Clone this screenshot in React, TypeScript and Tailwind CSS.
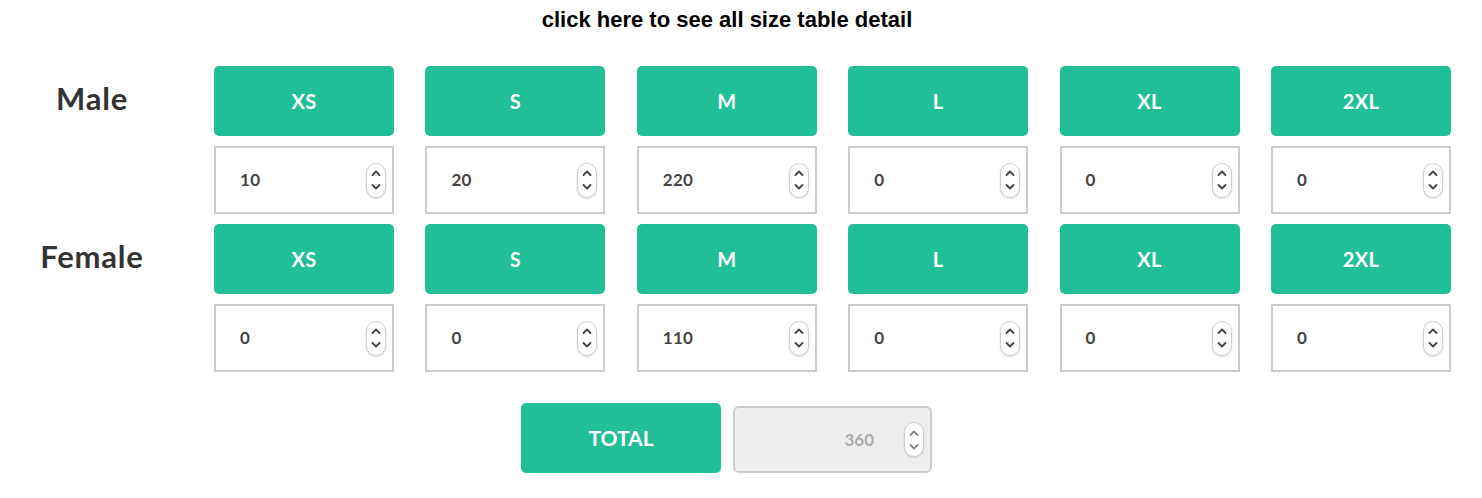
const sizes = ["XS", "S", "M", "L", "XL", "2XL"];

const rows = [
  { label: "Male", values: [10, 20, 220, 0, 0, 0] },
  { label: "Female", values: [0, 0, 110, 0, 0, 0] },
];

const Spinner = ({ muted }: { muted?: boolean }) => (
  <div className="flex h-[35px] w-[20px] flex-col items-center justify-center rounded-full border border-[#cfcfcf] bg-white shadow-[0_1px_2px_rgba(0,0,0,0.15)]">
    <svg width="12" height="28" viewBox="0 0 12 28" fill="none" stroke={muted ? "#888" : "#444"} strokeWidth="1.8" strokeLinecap="round" strokeLinejoin="round">
      <path d="M2.5 9 L6 5.5 L9.5 9" />
      <path d="M2.5 19 L6 22.5 L9.5 19" />
    </svg>
  </div>
);

const SizeButton = ({ text }: { text: string }) => (
  <div className="flex h-[70px] w-[180px] items-center justify-center rounded-[5px] bg-[#20bf96] text-[20px] font-bold tracking-[0.3px] text-white">
    {text}
  </div>
);

const NumberBox = ({ value }: { value: number }) => (
  <div className="flex h-[68px] w-[180px] items-center justify-between border-2 border-[#cccccc] bg-white pl-[24px] pr-[6px] text-[17px] font-bold tracking-[0.3px] text-[#444]">
    <span>{value}</span>
    <Spinner />
  </div>
);

export default function App() {
  return (
    <div className="h-[498px] w-[1482px] bg-white font-['Lato',sans-serif]">
      <div className="pt-[7px] text-center font-['Liberation_Sans',Arial,sans-serif] text-[22px] font-bold leading-[26px] text-black">
        <span className="relative left-[-14px]">click here to see all size table detail</span>
      </div>

      <div className="mt-[33px] flex flex-col gap-[10px]">
        {rows.map((row) => (
          <div key={row.label} className="flex flex-col gap-[10px]">
            <div className="flex items-center">
              <div className="w-[214px] pr-[30px] pb-[6px] text-center text-[31px] font-bold tracking-[0.8px] text-[#333]">
                {row.label}
              </div>
              <div className="flex w-[1237px] justify-between">
                {sizes.map((s) => (
                  <SizeButton key={s} text={s} />
                ))}
              </div>
            </div>
            <div className="flex">
              <div className="w-[214px]" />
              <div className="flex w-[1237px] justify-between">
                {row.values.map((v, i) => (
                  <NumberBox key={i} value={v} />
                ))}
              </div>
            </div>
          </div>
        ))}
      </div>

      <div className="mt-[30px] flex items-center pl-[521px]">
        <div className="flex h-[70px] w-[200px] items-center justify-center rounded-[5px] bg-[#20bf96] text-[21px] font-bold text-white">
          TOTAL
        </div>
        <div className="ml-[12px] mt-[4px] flex h-[67px] w-[199px] items-center justify-end gap-[30px] rounded-[6px] border-2 border-[#cccccc] bg-[#eeeeee] pr-[6px] text-[17px] font-bold text-[#aaaaaa]">
          <span>360</span>
          <Spinner muted />
        </div>
      </div>
    </div>
  );
}
